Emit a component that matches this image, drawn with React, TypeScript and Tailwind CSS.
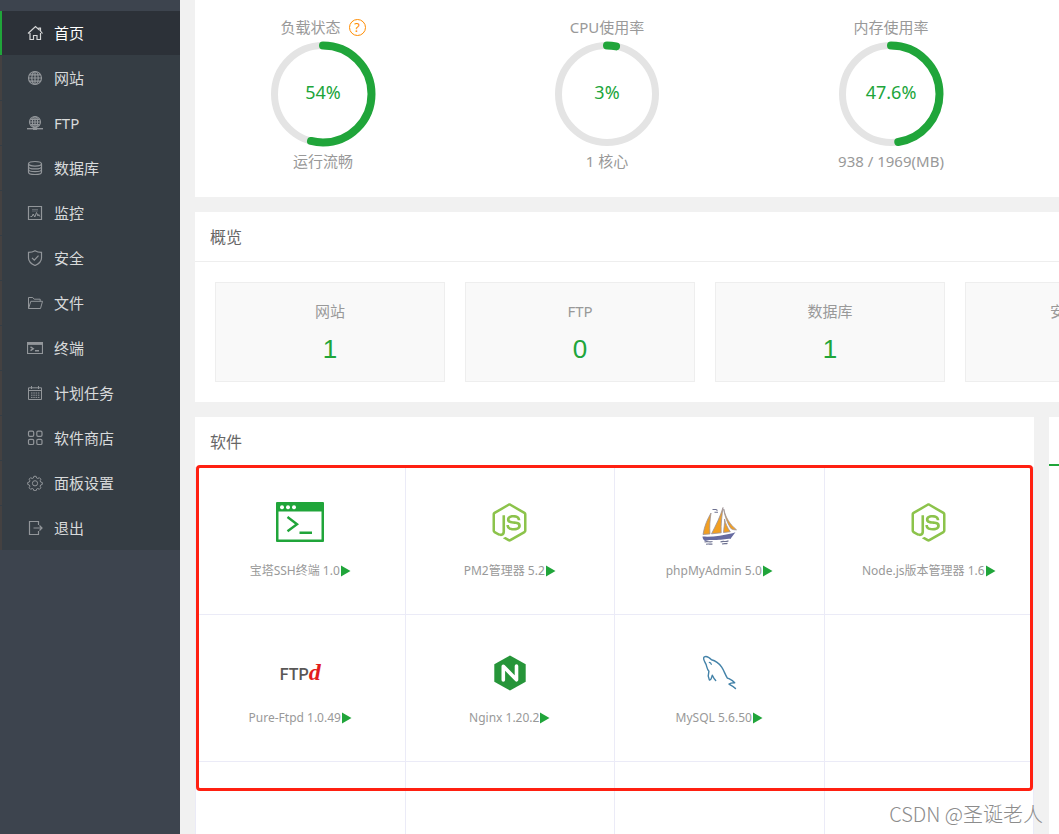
import type { ReactNode } from 'react';
import { FaNodeJs } from 'react-icons/fa';

interface MenuItem {
  name: string;
  icon: ReactNode;
}

interface Gauge {
  title: string;
  percent: number;
  detail: string;
  help?: boolean;
}

interface Software {
  name: string;
  icon: ReactNode;
}

const menu: MenuItem[] = [
  {
    name: '首页',
    icon: <path d="M1 8.500 8.500 1.500 12 4.600V3h1.500v3L15.500 8.500M3 8v6.500h3.500v-4h3.500v4h3.500V8" />,
  },
  {
    name: '网站',
    icon: (
      <>
        <circle cx="8" cy="8" r="6.500" />
        <ellipse cx="8" cy="8" rx="3.200" ry="6.500" />
        <path d="M8 1.500v13M1.500 8h13M2.500 4.800h11M2.500 11.200h11" />
      </>
    ),
  },
  {
    name: 'FTP',
    icon: (
      <>
        <circle cx="8" cy="7" r="5.500" />
        <ellipse cx="8" cy="7" rx="2.600" ry="5.500" />
        <path d="M8 1.500v11M2.500 7h11M3.500 4.300h9M3.500 9.700h9" />
        <path d="M0 13.700h16" strokeWidth="1.400" />
        <path d="M6 13.700h4" strokeWidth="2.500" />
      </>
    ),
  },
  {
    name: '数据库',
    icon: (
      <>
        <ellipse cx="8" cy="3.800" rx="6.500" ry="2.300" />
        <path d="M1.500 3.800v8.400c0 1.300 2.900 2.300 6.500 2.300s6.500-1 6.500-2.300V3.800" />
        <path d="M1.500 6.700c0 1.300 2.900 2.200 6.500 2.200s6.500-.9 6.500-2.200M1.500 9.500c0 1.300 2.900 2.200 6.500 2.200s6.500-.9 6.500-2.200" />
      </>
    ),
  },
  {
    name: '监控',
    icon: (
      <>
        <path d="M1.500 1.500h13v13h-13z" />
        <path d="M3.500 11.500H5l1.200-2.500 1.600 3 1.700-4.500L11 11l.8-1.500 1 2" strokeWidth="1" />
        <path d="M5 4.500h6M5 6h6" opacity=".5" />
      </>
    ),
  },
  {
    name: '安全',
    icon: (
      <>
        <path d="M8 .8c2 1.200 4.200 1.600 6.500 1.600V8c0 3.600-2.600 5.800-6.500 7.500C4.100 13.800 1.500 11.600 1.500 8V2.400C3.800 2.400 6 2 8 .8z" />
        <path d="m5 7.800 2.300 2.400 4.200-4.500" />
      </>
    ),
  },
  {
    name: '文件',
    icon: <path d="M1.500 13.500v-11h4.200l1.500 1.700h6v2M1.500 13.500l2.300-7.200h11.700l-2 7.200z" strokeWidth="1" />,
  },
  {
    name: '终端',
    icon: (
      <>
        <path d="M.5 2.500h15v11H.5z" />
        <path d="M1 3.500h14" strokeWidth="2.800" />
        <path d="m3.500 6.800 2.800 1.900-2.800 1.900M8 10.800h4" strokeWidth="1.400" />
      </>
    ),
  },
  {
    name: '计划任务',
    icon: (
      <g strokeWidth="1">
        <path d="M1.500 2.800h13v11.700h-13zM1.500 5.500h13M4.500 1v3M11.500 1v3" />
        <path d="M4 8h8.500M4 10.200h8.500M4 12.400h8.500" strokeDasharray="1.500 .8" />
      </g>
    ),
  },
  {
    name: '软件商店',
    icon: (
      <>
        <rect x="1.500" y="1.200" width="5.200" height="5.200" rx="1.300" />
        <rect x="9.800" y="1.200" width="5.200" height="5.200" rx="1.300" />
        <rect x="1.500" y="9.300" width="5.200" height="5.200" rx="1.300" />
        <rect x="9.800" y="9.300" width="5.200" height="5.200" rx="1.300" />
      </>
    ),
  },
  {
    name: '面板设置',
    icon: (
      <g strokeWidth="1">
        <path d="M6.900 1.300h2.200l.5 1.700 1.200.5 1.600-.8 1.500 1.500-.8 1.600.5 1.200 1.700.5v1.900l-1.700.6-.5 1.200.8 1.600-1.500 1.500-1.600-.8-1.200.5-.5 1.700H6.900l-.5-1.700-1.200-.5-1.600.8-1.500-1.500.8-1.600-.5-1.200L.7 9.400V7.500L2.400 7l.5-1.200-.8-1.600 1.500-1.500 1.600.8 1.200-.5z" />
        <circle cx="8" cy="8.300" r="2.600" />
      </g>
    ),
  },
  {
    name: '退出',
    icon: <path d="M11.500 5V1.500h-9v13h9V11M6.500 8H15M12.500 5.500 15 8l-2.500 2.500" />,
  },
];

const gauges: Gauge[] = [
  { title: '负载状态', percent: 54, detail: '运行流畅', help: true },
  { title: 'CPU使用率', percent: 3, detail: '1 核心' },
  { title: '内存使用率', percent: 47.6, detail: '938 / 1969(MB)' },
];

const overview = [
  { name: '网站', count: 1 },
  { name: 'FTP', count: 0 },
  { name: '数据库', count: 1 },
  { name: '安全风险', count: 0 },
];

function TerminalLogo() {
  return (
    <svg viewBox="0 0 48 48" className="size-12">
      <rect y="4" width="48" height="40" rx="1" fill="#20a53a" />
      <path d="M2.500 13.500h43v28h-43z" fill="#fff" />
      <circle cx="6" cy="9.200" r="2" fill="#fff" />
      <circle cx="12" cy="9.200" r="2" fill="#fff" />
      <circle cx="18" cy="9.200" r="2" fill="#fff" />
      <path d="m11.500 19 9.500 7.200-9.500 7M23.500 34.800H36" fill="none" stroke="#20a53a" strokeWidth="2.400" />
    </svg>
  );
}

function NodeLogo() {
  return <FaNodeJs className="size-[39px] text-[#8cc34b]" />;
}

function PhpMyAdminLogo() {
  return (
    <svg viewBox="0 0 48 48" className="size-12">
      <g fill="#f29f21" stroke="#9a9298" strokeWidth=".8" strokeLinejoin="round">
        <path d="M16 15c-3.500 6-6.500 12.500-8 21.500l7-.6c-.6-7.500 0-14 1-20.900z" />
        <path d="M28 9.500C25.500 18 21 27 16.500 35.800l9.700-1C25.700 26 27 18 28 9.500z" />
        <path d="M28.700 11c1.800 8.500 6.300 15.500 12.800 20.800-2.200.2-4.300-.3-5.800-1.500-3.500-5.500-6-12-7-19.300z" />
        <path d="M29.500 21c.3 5-.7 9-1 13.500l6.800-.8c-3-4-4.700-8-5.800-12.700z" />
      </g>
      <path d="M7.500 38.500c10 .7 20-1 30-3.300l3-.9c-2 2.700-3.500 4.200-5 6.600-4.500-.5-7.500 1.500-11.500.8-4 .8-8.500-.3-14 1.200-1.700-1-2.500-2.500-2.500-4.400z" fill="#666ba0" />
      <path d="M9.500 44c3-1.300 5 .8 8-.5M11 46.300c3-.8 4 .3 6.500-.3M25.500 44c3-1.500 5 .5 8-1.300M27 46c2.500-.7 3.500 0 5.500-.6M17.500 11.500H21l1.500 1M19.500 14.300H23" fill="none" stroke="#6d7190" strokeWidth="1.100" />
    </svg>
  );
}

function PureFtpdLogo() {
  return (
    <div className="mt-2 flex items-baseline font-['Roboto',sans-serif] text-base leading-8 font-medium text-[#595757]">
      <span>FTP</span>
      <em className="font-['Liberation_Serif',serif] text-2xl leading-8 font-bold text-[#e21d1d]">d</em>
    </div>
  );
}

function NginxLogo() {
  return (
    <svg viewBox="0 0 48 48" className="size-12">
      <path d="M24 10.500 39.700 19.200v17.600L24 45.500 8.300 36.800V19.200z" fill="#269539" />
      <path d="M17.300 35V21.200l13.200 13.600V21" fill="none" stroke="#fff" strokeWidth="3.600" strokeLinecap="round" strokeLinejoin="round" />
    </svg>
  );
}

function MysqlLogo() {
  return (
    <svg viewBox="0 0 48 48" className="size-12" fill="none" stroke="#4382a8" strokeWidth="1.400" strokeLinecap="round" strokeLinejoin="round">
      <path d="M40.500 43.500c-1.600-2-3.800-3-6.500-4.400 1.700-1.200 3.600-1.200 5.700-1.300-2.200-2.800-5.200-3.700-7.500-5-2.200-3.400-3.200-7.300-5.500-10.700-2.600-3.600-6-6.300-10.200-7.300-2.300-2.400-5.300-4-7.400-2.800-1.700 1.800.8 4.700 2 7.500.9 2.700 1 4.800 2.800 6.800-.9 2.800-.8 5.800.4 8.500 1.500.8 2.400-2.200 3-4.600 1 2.200 1.900 3.700 3.400 5.300" />
      <path d="M14.300 17.300c1.200.2 1.800 1 2 2" strokeWidth="1.200" />
    </svg>
  );
}

const software: Software[] = [
  { name: '宝塔SSH终端 1.0', icon: <TerminalLogo /> },
  { name: 'PM2管理器 5.2', icon: <NodeLogo /> },
  { name: 'phpMyAdmin 5.0', icon: <PhpMyAdminLogo /> },
  { name: 'Node.js版本管理器 1.6', icon: <NodeLogo /> },
  { name: 'Pure-Ftpd 1.0.49', icon: <PureFtpdLogo /> },
  { name: 'Nginx 1.20.2', icon: <NginxLogo /> },
  { name: 'MySQL 5.6.50', icon: <MysqlLogo /> },
];

// Platzhalter-Zellen, damit das Raster immer volle Zeilen hat
const emptyCells = Array.from({ length: 12 - software.length }, (_, i) => i);

function Sidebar() {
  return (
    <aside className="w-[180px] shrink-0 bg-[#3d444e] pt-[11px]">
      <nav className="bg-[#353d44]">
        {menu.map((item, index) => (
          <a
            key={item.name}
            href="#"
            className={
              index === 0
                ? 'mb-px flex h-11 items-center gap-[11px] border-l-2 border-[#20a53a] bg-[#2c3138] pl-[25px] text-[15px] text-white'
                : 'mb-px flex h-11 items-center gap-[11px] border-l-2 border-[#444141] pl-[25px] text-[15px] text-[#d8dadb]'
            }
          >
            <svg
              viewBox="0 0 16 16"
              className={index === 0 ? 'size-4 text-[#d5d6d7]' : 'size-4 text-[#92969a]'}
              fill="none"
              stroke="currentColor"
              strokeWidth="1.200"
            >
              {item.icon}
            </svg>
            {item.name}
          </a>
        ))}
      </nav>
    </aside>
  );
}

function GaugeCard({ gauge }: { gauge: Gauge }) {
  return (
    <div className="flex w-64 shrink-0 flex-col items-center text-[15px] leading-6 text-[#999]">
      <div className="flex items-center gap-2">
        {gauge.title}
        {gauge.help && (
          <button className="flex size-[17px] items-center justify-center rounded-full border border-[#ff8c00] text-[13px] text-[#ff8c00]">
            ?
          </button>
        )}
      </div>
      <div className="relative my-0.5">
        <svg viewBox="0 0 106 106" className="size-[106px]" fill="none">
          <circle cx="53" cy="53" r="48.500" stroke="#e4e4e4" strokeWidth="7" />
          <circle
            cx="53"
            cy="53"
            r="48.500"
            stroke="#20a53a"
            strokeWidth="8"
            strokeLinecap="round"
            pathLength={100}
            strokeDasharray={`${gauge.percent} 100`}
            transform="rotate(-90 53 53)"
          />
        </svg>
        <span className="absolute inset-0 flex items-center justify-center pb-1 text-lg text-[#20a53a]">
          {gauge.percent}%
        </span>
      </div>
      <div>{gauge.detail}</div>
    </div>
  );
}

export default function App() {
  return (
    <div className="relative flex h-screen overflow-hidden bg-[#f1f1f1] font-['Noto_Sans','Noto_Sans_CJK_SC',sans-serif]">
      <Sidebar />

      <main className="flex min-w-0 flex-1 flex-col gap-[15px] overflow-hidden pl-[15px]">
        <section className="flex shrink-0 gap-7 overflow-hidden bg-white pt-[15px] pb-6">
          {gauges.map((gauge) => (
            <GaugeCard key={gauge.title} gauge={gauge} />
          ))}
        </section>

        <section className="shrink-0 overflow-hidden bg-white">
          <h2 className="flex h-[50px] items-center border-b border-[#eee] px-[15px] text-base text-[#666]">概览</h2>
          <div className="flex gap-5 p-5">
            {overview.map((item) => (
              <div
                key={item.name}
                className="flex h-[100px] w-[230px] shrink-0 flex-col items-center border border-[#eee] bg-[#f9f9f9] pt-4"
              >
                <div className="text-[15px] leading-6 text-[#999]">{item.name}</div>
                <a href="#" className="mt-1.5 font-['Liberation_Sans',sans-serif] text-[26px] leading-10 text-[#20a53a]">
                  {item.count}
                </a>
              </div>
            ))}
          </div>
        </section>

        <div className="flex shrink-0 gap-[15px]">
          <section className="relative min-w-0 flex-1 bg-white">
            <h2 className="flex h-[50px] items-center px-[15px] text-base text-[#666]">软件</h2>
            <div className="grid auto-rows-[147px] grid-cols-4 border-t border-l border-[#ebebf7]">
              {software.map((item) => (
                <div key={item.name} className="flex flex-col items-center border-r border-b border-[#ebebf7] pt-[30px]">
                  <div className="flex h-12 items-center">{item.icon}</div>
                  <a href="#" className="mt-[17px] flex items-center text-xs leading-4 text-[#999]">
                    {item.name}
                    <svg viewBox="0 0 10 12" className="ml-px h-3 w-2.5" fill="#20a53a">
                      <path d="M0 .5 9.500 6 0 11.500z" />
                    </svg>
                  </a>
                </div>
              ))}
              {emptyCells.map((i) => (
                <div key={i} className="border-r border-b border-[#ebebf7]" />
              ))}
            </div>
            <div className="pointer-events-none absolute inset-x-px top-12 h-[326px] rounded-[4px] border-3 border-[#ff2011]" />
          </section>

          <section className="w-2.5 shrink-0 bg-white pt-[47px]">
            <div className="h-0.5 bg-[#20a53a]" />
          </section>
        </div>
      </main>

      <div className="absolute right-4 bottom-1.5 font-['Noto_Sans_CJK_SC',sans-serif] text-[20px] leading-7 font-light text-[#8c8c8c]">
        CSDN @圣诞老人
      </div>
    </div>
  );
}
